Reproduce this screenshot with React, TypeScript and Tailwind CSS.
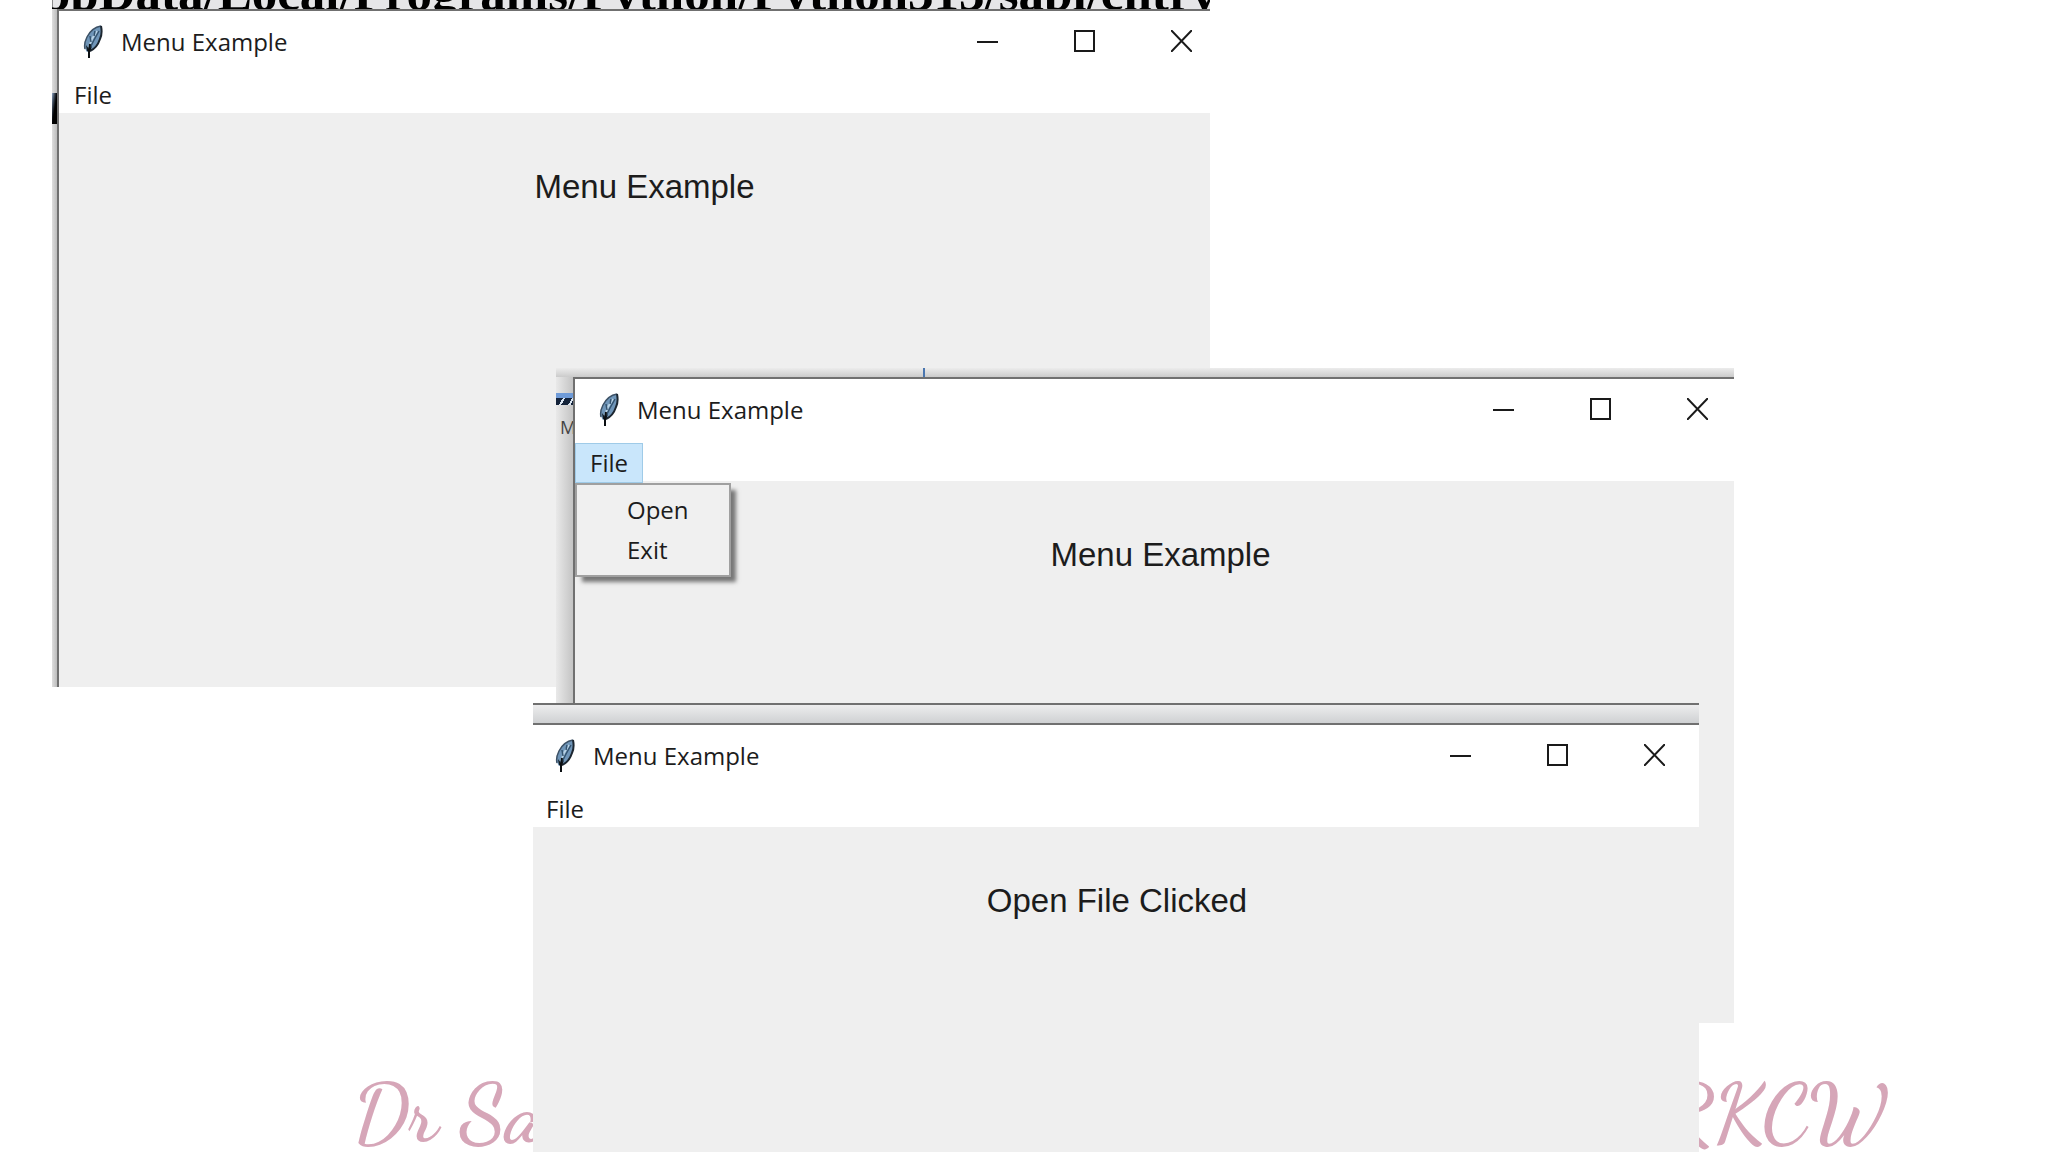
import React from "react";
import { clsx } from "clsx";

type AppWindowProps = {
  title: string;
  message: string;
  menuOpen?: boolean;
  className?: string;
  contentClassName?: string;
};

const Feather: React.FC = () => (
  <svg className="w-5 h-[34px]" viewBox="0 0 20 34" aria-hidden="true">
    <path d="M18 1C12 2 7 6 4 12C1 17 1 23 4 27L7 26C12 24 15 20 17 14C19 9 19 4 18 1Z" fill="#6f95b8" />
    <path d="M18 1C12 2 7 6 4 12C2 16 1 20 2 24" fill="none" stroke="#3c5166" strokeWidth="1.5" />
    <path d="M18 1C19 6 19 10 17 14C15 20 12 24 7 26" fill="none" stroke="#1c2630" strokeWidth="2" />
    <path d="M14 6L9 14L6 22" fill="none" stroke="#b9d3e6" strokeWidth="2" />
    <path d="M16 6L11 15L7 23M12 6L11 11M7 11L8 17" fill="none" stroke="#34536f" strokeWidth="1.5" />
    <path d="M3 20L4 26L7 27L9 21L6 24Z" fill="#10181f" />
    <path d="M7 19L6 26V33" fill="none" stroke="#0b0f12" strokeWidth="2" />
  </svg>
);

const WindowControls: React.FC = () => (
  <div className="flex items-center gap-[76px] pr-[38px] pb-1 text-[#1a1a1a]">
    <button type="button" aria-label="Minimize" className="w-[21px] h-[22px]">
      <svg viewBox="0 0 21 22" aria-hidden="true">
        <path d="M0 12H21" stroke="currentColor" strokeWidth="2" />
      </svg>
    </button>
    <button type="button" aria-label="Maximize" className="w-[21px] h-[22px]">
      <svg viewBox="0 0 21 22" aria-hidden="true">
        <path d="M1 1H20V21H1Z" fill="none" stroke="currentColor" strokeWidth="2" />
      </svg>
    </button>
    <button type="button" aria-label="Close" className="w-[21px] h-[22px]">
      <svg viewBox="0 0 21 22" aria-hidden="true">
        <path d="M0 0L21 22M21 0L0 22" stroke="currentColor" strokeWidth="2" />
      </svg>
    </button>
  </div>
);

const FileMenu: React.FC<{ open?: boolean }> = ({ open }) => (
  <div className="relative">
    <button
      type="button"
      aria-haspopup="menu"
      aria-expanded={!!open}
      className={clsx(
        "h-10 px-3.5 border",
        open ? "bg-[#c9e6fb] border-[#9fcbe8]" : "border-transparent"
      )}
    >
      File
    </button>
    {open && (
      <div
        role="menu"
        className="absolute top-full left-0 z-10 w-[156px] py-[5px] flex flex-col bg-[#f0f0f0] border-2 border-[#a0a0a0] shadow-[6px_6px_4px_-1px_#777]"
      >
        <button type="button" role="menuitem" className="h-10 pl-[50px] text-left">Open</button>
        <button type="button" role="menuitem" className="h-10 pl-[50px] text-left">Exit</button>
      </div>
    )}
  </div>
);

const AppWindow: React.FC<AppWindowProps> = ({ title, message, menuOpen, className, contentClassName }) => (
  <section className={clsx("flex-1 min-w-0 overflow-hidden bg-[#efefef] border-[#707070]", className)}>
    <div className={contentClassName}>
      <header className="h-16 flex items-center justify-between bg-white">
        <div className="flex items-center gap-[18px] pl-6 pb-0.5">
          <Feather />
          <h2>{title}</h2>
        </div>
        <WindowControls />
      </header>
      <nav className="h-[38px] bg-white">
        <FileMenu open={menuOpen} />
      </nav>
      <p className="pt-[54px] text-center font-['Liberation_Sans',sans-serif] text-[33px] leading-10">
        {message}
      </p>
    </div>
  </section>
);

const App: React.FC = () => {
  return (
    <main className="relative h-screen min-h-[1024px] overflow-hidden bg-white text-[#1c1c1c] font-['Open_Sans',sans-serif] text-[24px] leading-8">
      {/* Watermark behind the windows */}
      <div className="absolute inset-x-0 bottom-0 flex justify-between pl-[353px] pr-[162px] text-[83px] leading-[76px] font-semibold text-[#d6a6b8] font-['Dancing_Script','Liberation_Serif',cursive]">
        <span>Dr Sa</span>
        <span>RKCW</span>
      </div>

      {/* First window */}
      <div className="absolute top-0 left-[52px] right-[838px] h-[687px] flex flex-col overflow-hidden bg-[#dedede]">
        <div className="h-[9px] flex flex-col justify-end overflow-hidden bg-[#e6e6e8]">
          <p className="-ml-2.5 -mb-2.5 whitespace-nowrap font-['Liberation_Serif',serif] font-bold text-[51px] leading-[52px] text-black">
            ppData/Local/Programs/Python/Python313/sabi/cntrv
          </p>
        </div>
        <div className="flex-1 flex">
          <div className="w-[5px] bg-linear-to-r from-[#dedede] to-[#bcbcbc]">
            <div className="mt-[84px] h-[31px] bg-linear-to-br from-[#8fa8c8] to-black to-60%" />
          </div>
          <AppWindow
            title="Menu Example"
            message="Menu Example"
            className="border-t-2 border-l-2"
            contentClassName="-mr-5"
          />
        </div>
      </div>

      {/* Second window with the File menu dropped down */}
      <div className="absolute top-[368px] left-[556px] right-[314px] h-[655px] flex flex-col overflow-hidden bg-[#efefef]">
        <div className="h-[9px] bg-linear-to-b from-[#ececec] to-[#cbcbcb]">
          <div className="ml-[367px] w-0.5 h-full bg-[#4a76b0]" />
        </div>
        <div className="flex-1 flex">
          <div className="w-[17px] overflow-hidden bg-linear-to-r from-[#e9e9e9] to-[#c4c4c4]">
            <div className="mt-4 h-[5px] bg-[#6f9bd8]" />
            <div className="h-[7px] bg-[repeating-linear-gradient(120deg,#14233a_0_6px,#dbe6f2_6px_8px)]" />
            <p className="mt-2 pl-1 text-lg text-[#444]">M</p>
          </div>
          <AppWindow
            title="Menu Example"
            message="Menu Example"
            menuOpen
            className="border-t-2 border-l-2"
            contentClassName="-mr-3"
          />
        </div>
      </div>

      {/* Third window, after Open was chosen */}
      <div className="absolute top-[703px] bottom-0 left-[533px] right-[349px] flex flex-col overflow-hidden bg-[#efefef]">
        <div className="h-5 border-t-2 border-[#707070] bg-linear-to-b from-[#ededee] to-[#cfd1d3]" />
        <div className="flex-1 flex">
          <AppWindow
            title="Menu Example"
            message="Open File Clicked"
            className="border-t-2"
            contentClassName="-mr-1 -ml-0.5"
          />
        </div>
      </div>
    </main>
  );
};

export default App;
